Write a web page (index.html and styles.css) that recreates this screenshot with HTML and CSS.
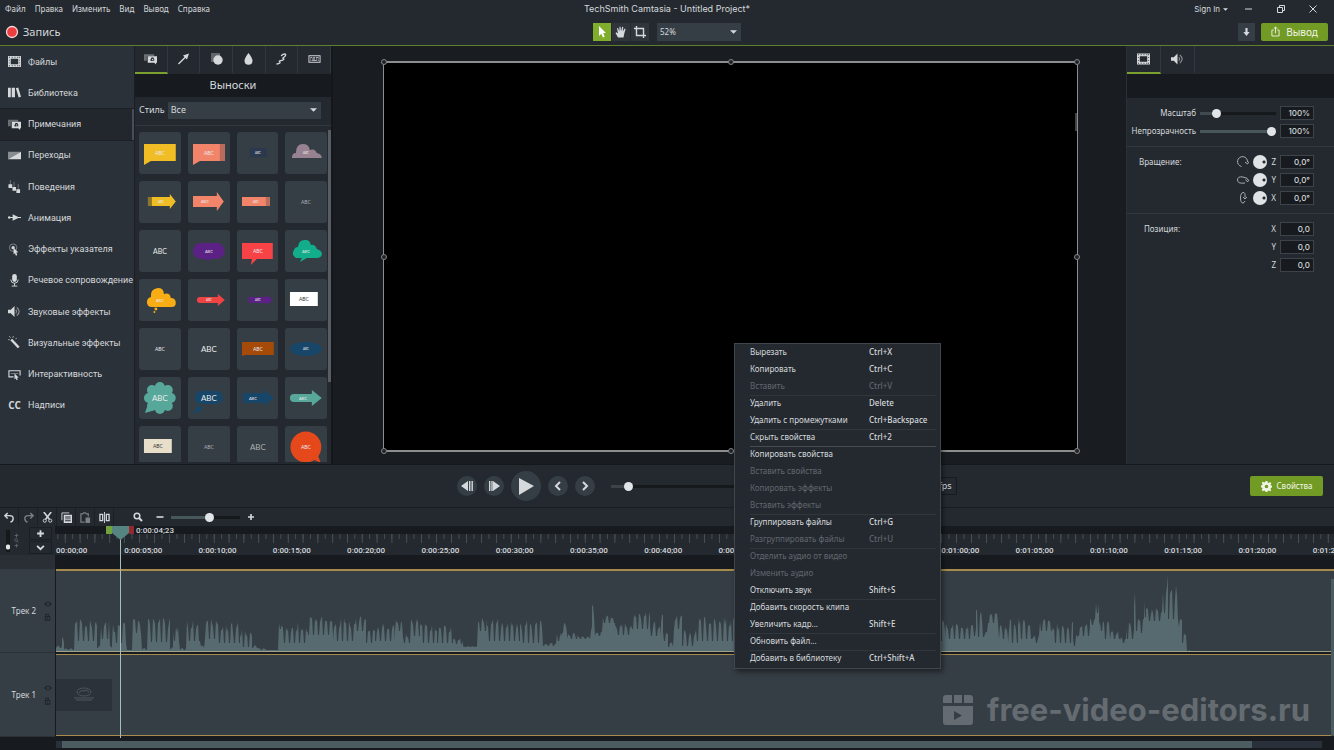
FILE: index.html
```html
<!DOCTYPE html>
<html lang="ru">
<head>
<meta charset="utf-8">
<title>TechSmith Camtasia - Untitled Project*</title>
<link rel="stylesheet" href="styles.css">
</head>
<body>
<svg class="defs" aria-hidden="true">
  <symbol id="film" viewBox="0 0 14 12"><path fill-rule="evenodd" d="M0 0h14v12H0zM3 3v6h8V3zM1 1v1h1V1zm3 0v1h1V1zm3 0v1h1V1zm3 0v1h1V1zM1 10v1h1v-1zm3 0v1h1v-1zm3 0v1h1v-1zm3 0v1h1v-1zM1 4v1h1V4zm0 3v1h1V7zm11-6v1h1V1zm0 3v1h1V4zm0 3v1h1V7zm0 3v1h1v-1z"/></symbol>
  <symbol id="callout" viewBox="0 0 14 12"><path opacity=".4" d="M0 1h11v2H3v5H0z"/><path fill-rule="evenodd" d="M4 3h10v7h-1v2l-2-2H4zM8 4.500L7.500 6q-1 .5-.5 1.500t2 .5h2V6L10 4.500zM8.500 6H10v1H8.500z"/></symbol>
  <symbol id="speaker" viewBox="0 0 14 12"><path d="M0 4h3l4-4v12L3 8H0z"/><path d="M8.500 4q1.500 2 0 4M9.500 1.500q5 4.500 0 9" fill="none" stroke="currentColor" stroke-width="1.200" opacity=".6"/></symbol>
  <symbol id="caret" viewBox="0 0 8 4"><path d="M0 0h8L4 4z"/></symbol>
  <symbol id="eye" viewBox="0 0 10 6"><path fill-rule="evenodd" d="M0 3q5-6 10 0-5 6-10 0zm3 0a2 2 0 004 0 2 2 0 00-4 0z"/></symbol>
  <symbol id="lock" viewBox="0 0 8 9"><path d="M1.500 4V1.500h3V3M1 4h5v4H1z" fill="none" stroke="currentColor" stroke-width="1.200"/><path d="M3 5h1v2H3z"/></symbol>
  <symbol id="lens" viewBox="0 0 10 10"><circle cx="4" cy="4" r="2.800" fill="none" stroke="currentColor" stroke-width="1.500"/><path d="M6 6l3 3" stroke="currentColor" stroke-width="2"/></symbol>
  <symbol id="plus" viewBox="0 0 8 8"><path d="M3.200 1h1.600v2.200H7v1.600H4.800V7H3.200V4.800H1V3.200h2.200z"/></symbol>
</svg>

<header class="titlebar">
  <nav class="menubar">
    <button>Файл</button><button>Правка</button><button>Изменить</button><button>Вид</button><button>Вывод</button><button>Справка</button>
  </nav>
  <h1>TechSmith Camtasia - Untitled Project*</h1>
  <div class="window-buttons">
    <button class="signin">Sign In <svg class="caret-s"><use href="#caret"/></svg></button>
    <button aria-label="Свернуть"><svg viewBox="0 0 10 10"><path d="M1 5h7" stroke="currentColor"/></svg></button>
    <button aria-label="Развернуть"><svg viewBox="0 0 10 10"><path d="M1.500 3.500h5v5h-5zM3.500 3V1.500h5v5H7" fill="none" stroke="currentColor"/></svg></button>
    <button aria-label="Закрыть"><svg viewBox="0 0 10 10"><path d="M1.500 1.500l7 7M8.500 1.500l-7 7" stroke="currentColor"/></svg></button>
  </div>
</header>

<div class="toolbar">
  <button class="record"><svg viewBox="0 0 14 14"><circle cx="7" cy="7" r="5.500" fill="#ee3c40" stroke="#f4dadb" stroke-width="1.300"/></svg>Запись</button>
  <div class="tools">
    <button class="tool active" aria-label="Выделение"><svg viewBox="0 0 12 12"><path d="M3 0v10l2.300-2.200L7 11.500l1.700-.8L7.200 7H10z"/></svg></button>
    <button class="tool" aria-label="Рука"><svg viewBox="0 0 12 12"><path d="M3 11.500L.5 7l1-.7L3 7.500 2 2.300l1-.3 1.300 3.500L4.500.800h1.100L6 5.200 7.300.800l1 .2L7.800 5.500l1.900-3 .9.400L9.300 7.500 8.500 11.500z"/></svg></button>
    <button class="tool" aria-label="Обрезка"><svg viewBox="0 0 12 12"><path d="M0 2.500h9.500V12M2.500 0v9.500H12" fill="none" stroke="currentColor" stroke-width="1.400"/></svg></button>
    <div class="select-box zoom-box"><select aria-label="Масштаб холста"><option>52%</option></select><svg class="caret"><use href="#caret"/></svg></div>
  </div>
  <div class="share">
    <button class="download" aria-label="Загрузить"><svg viewBox="0 0 10 10"><path d="M3.800.500h2.400V5H8.500L5 9.500 1.500 5h2.300z"/></svg></button>
    <button class="green export"><svg viewBox="0 0 10 12"><path d="M3 4.500H1v6.500h8V4.500H7M5 8V1M3 3l2-2 2 2" fill="none" stroke="currentColor"/></svg>Вывод</button>
  </div>
</div>

<main class="workspace">
  <nav class="sidebar">
    <button><svg><use href="#film"/></svg>Файлы</button>
    <button><svg viewBox="0 0 14 12"><path d="M0 1h3v10H0zM4 1h3.500v10H4zM8.500 1.500l2.500-1 3 10-2.500 1z"/></svg>Библиотека</button>
    <button class="current"><svg><use href="#callout"/></svg>Примечания</button>
    <button><svg viewBox="0 0 14 12"><path d="M0 2h14L0 10z" opacity=".55"/><path d="M14 2v8H0z"/></svg>Переходы</button>
    <button><svg viewBox="0 0 14 14"><path d="M2 0h1v5H2zM6 2h1v6H6zM10.500 4h1v6h-1z" opacity=".4"/><path d="M.5 4.500h4v4h-4zM4.800 7.500h3.800v4H4.800zM9 10h4v4H9z"/></svg>Поведения</button>
    <button><svg viewBox="0 0 14 12"><path d="M0 5.400h5V2.500l6 2.900h3v1.200h-3L5 9.500V6.600H0z"/><circle cx="1.300" cy="6" r="1.300"/></svg>Анимация</button>
    <button><svg viewBox="0 0 14 14"><circle cx="5.500" cy="5" r="4" fill="none" stroke="currentColor" opacity=".5"/><circle cx="5.500" cy="5" r="1.800"/><path d="M6 5l5 5-2 .3 1 2.700-1.500.6-1-2.600L6 12z"/></svg>Эффекты указателя</button>
    <button><svg viewBox="0 0 14 14"><rect x="4.500" y="0" width="5" height="8.500" rx="2.500"/><path d="M3 6q0 4 4 4t4-4M7 10v3M4 13h6" fill="none" stroke="currentColor"/></svg>Речевое сопровождение</button>
    <button><svg><use href="#speaker"/></svg>Звуковые эффекты</button>
    <button><svg viewBox="0 0 14 14"><path d="M2.500 4.500L4.500 3l8 8.500-2 1.800z"/><path d="M1 0l2 2M6 0L5 2M0 4h2M8 3l1.500-.5" stroke="currentColor" opacity=".7"/></svg>Визуальные эффекты</button>
    <button><svg viewBox="0 0 14 12"><path d="M6 8.500H1V2h12v5" fill="none" stroke="currentColor" stroke-width="1.200"/><path d="M3 5h8" stroke="currentColor" opacity=".5"/><path d="M7 5l4.500 4.300-1.800.3.800 2.200-1.300.2-1-2L7 11z"/></svg>Интерактивность</button>
    <button><b>CC</b>Надписи</button>
  </nav>

  <section class="library">
    <div class="tabs six">
      <button class="on" aria-label="Выноски"><svg><use href="#callout"/></svg></button>
      <button aria-label="Стрелки"><svg viewBox="0 0 12 12"><path d="M.5 10.600L7 4 5.500 2.500 11.500.5 9.500 6.500 8 5 1.400 11.500z"/></svg></button>
      <button aria-label="Фигуры"><svg viewBox="0 0 13 12"><path d="M1 0h9v9H1z" opacity=".35"/><circle cx="8" cy="7" r="4.700"/></svg></button>
      <button aria-label="Размытие"><svg viewBox="0 0 12 12"><path d="M6 0q4 5 4 7.800a4 4 0 01-8 0Q2 5 6 0z"/></svg></button>
      <button aria-label="Рисование"><svg viewBox="0 0 12 12"><path d="M6 2.500C8 .5 11 .5 10 2.500S6.500 5 7.500 5.500 9 6 7.500 7 3 7.500 4 8.500 5 10.500 1.500 11" fill="none" stroke="currentColor" stroke-width="1.300" stroke-linecap="round"/></svg></button>
      <button aria-label="Клавиши"><svg viewBox="0 0 14 12"><path fill-rule="evenodd" d="M.5 2h13v8H.5zM1.500 3v6h11V3z"/><path d="M2.500 4h2v1h-2zm3 0h2v1h-2zm3 0h3v1h-3zm-6 1.500h1v1h-1zm2 0h3v1h-3zm4 0h1v1h-1zm2 0h1v1h-1zM2.500 7h1v1h-1zm2 0h5v1h-5zm6 0h1v1h-1z"/></svg></button>
    </div>
    <h2>Выноски</h2>
    <div class="style-row"><label for="style">Стиль</label><div class="select-box"><select id="style"><option>Все</option></select><svg class="caret"><use href="#caret"/></svg></div></div>
    <div class="thumbs">
      <svg viewBox="0 0 42 42"><path fill="#f0bd25" d="M5 12h32v17H12l-7 4z"/><text x="21" y="23" class="t5">ABC</text></svg>
      <svg viewBox="0 0 42 42"><path fill="#f28569" d="M5 12h32v17H12l-7 4z"/><path fill="#b96c5b" d="M32 12h5v17h-5z"/><text x="21" y="23" class="t5">ABC</text></svg>
      <svg viewBox="0 0 42 42"><path fill="#2c384e" d="M13 16h17v9H14l-4 3 3-4z"/><text x="21" y="22" class="t3">ABC</text></svg>
      <svg viewBox="0 0 42 42"><path fill="#988292" d="M7 26q0-5 4-5 0-9 7-9 6 0 7 6 5-2 7 3 5 1 5 5z"/><text x="21" y="22" class="t3">ABC</text></svg>
      <svg viewBox="0 0 42 42"><path fill="#efbd25" d="M9 16h22v-3l6 7.500-6 7.500v-3H9z"/><path fill="#8d752a" d="M9 16h4v9H9z"/><text x="22" y="22" class="t3">ABC</text></svg>
      <svg viewBox="0 0 42 42"><path fill="#f28569" d="M5 15h24v-4l7 9.500-7 9.500v-4H5z"/><text x="17" y="22" class="t4">ABC</text></svg>
      <svg viewBox="0 0 42 42"><path fill="#f28569" d="M5 16h28v9H5z"/><path fill="#b96c5b" d="M29 16h4v9h-4z"/><text x="19" y="22" class="t3">ABC</text></svg>
      <svg viewBox="0 0 42 42"><text x="21" y="23" class="t5 dim">ABC</text></svg>
      <svg viewBox="0 0 42 42"><text x="21" y="24" class="t7">ABC</text></svg>
      <svg viewBox="0 0 42 42"><rect x="5" y="13" width="32" height="16" rx="8" fill="#5c2185"/><path fill="#5c2185" d="M17 28l4 4v-4z"/><text x="21" y="23" class="t4">ABC</text></svg>
      <svg viewBox="0 0 42 42"><path fill="#f74346" d="M5 13h31v16H20l-6 6 1-6H5z"/><text x="21" y="23" class="t5">ABC</text></svg>
      <svg viewBox="0 0 42 42"><path fill="#12ad8b" d="M11 28q-5-3-2-8 1-3 4-3 1-8 8-7 4 0 5 5 4-1 6 4 6 2 5 6-1 3-5 3H22l-7 4 2-4z"/><text x="21" y="23" class="t4">ABC</text></svg>
      <svg viewBox="0 0 42 42"><path fill="#f9ad14" d="M13 28q-5 0-5-5 0-4 4-5-1-8 7-9 6 0 6 6 6-2 7 4 5 0 5 5 0 4-4 4z"/><circle cx="17" cy="30" r="1.500" fill="#f9ad14"/><circle cx="15.500" cy="33" r="1" fill="#f9ad14"/><text x="21" y="23" class="t4">ABC</text></svg>
      <svg viewBox="0 0 42 42"><path fill="#ef4444" d="M12 18h18v-3l7 6-7 6v-3H12a3 3 0 010-6z"/><text x="21" y="22" class="t3">ABC</text></svg>
      <svg viewBox="0 0 42 42"><path fill="#5c2185" d="M11 18h19v-2l6 5-6 5v-2H12z"/><text x="21" y="22" class="t3">ABC</text></svg>
      <svg viewBox="0 0 42 42"><path fill="#fff" d="M5 13h28v14H5z"/><text x="19" y="22" class="t5 dark">ABC</text></svg>
      <svg viewBox="0 0 42 42"><text x="21" y="23" class="t5">ABC</text></svg>
      <svg viewBox="0 0 42 42"><text x="21" y="24" class="t8">ABC</text></svg>
      <svg viewBox="0 0 42 42"><path fill="#a54a09" d="M5 14h32v13H8l-3 1z"/><text x="21" y="23" class="t5">ABC</text></svg>
      <svg viewBox="0 0 42 42"><ellipse cx="21" cy="21" rx="16" ry="7" fill="#174669"/><text x="21" y="22" class="t3">ABC</text></svg>
      <svg viewBox="0 0 42 42"><g fill="#57a89a"><circle cx="21" cy="21" r="13"/><circle cx="21" cy="10" r="5"/><circle cx="21" cy="32" r="5"/><circle cx="10" cy="21" r="5"/><circle cx="32" cy="21" r="5"/><circle cx="13" cy="13" r="5"/><circle cx="29" cy="13" r="5"/><circle cx="13" cy="29" r="5"/><circle cx="29" cy="29" r="5"/><path d="M6 36l2-6 5 4z"/></g><text x="21" y="24" class="t8">ABC</text></svg>
      <svg viewBox="0 0 42 42"><rect x="7" y="14" width="28" height="13" rx="6" fill="#174669"/><circle cx="11" cy="32" r="3" fill="#174669"/><circle cx="7" cy="35" r="1.500" fill="#174669"/><text x="21" y="24" class="t8">ABC</text></svg>
      <svg viewBox="0 0 42 42"><path fill="#174669" d="M6 16h21v-3l10 8-10 8v-3H6z"/><text x="16" y="23" class="t4">ABC</text></svg>
      <svg viewBox="0 0 42 42"><path fill="#57a89a" d="M9 17h18v-4l10 8-10 8v-4H9a4 4 0 010-8z"/><text x="18" y="23" class="t4">ABC</text></svg>
      <svg viewBox="0 0 42 42"><path fill="#e8dfcb" d="M5 13h28v14H5z"/><text x="19" y="22" class="t5 dark">ABC</text></svg>
      <svg viewBox="0 0 42 42"><text x="21" y="23" class="t5 dim">ABC</text></svg>
      <svg viewBox="0 0 42 42"><text x="21" y="24" class="t8 dim">ABC</text></svg>
      <svg viewBox="0 0 42 42"><circle cx="21" cy="21" r="15.500" fill="#e5481b"/><path fill="#e5481b" d="M27 33l9 4-3-8z"/><text x="21" y="23" class="t5">ABC</text></svg>
    </div>
  </section>

  <section class="stage">
    <div class="canvas">
      <i class="h nw"></i><i class="h n"></i><i class="h ne"></i><i class="h w"></i><i class="h e"></i><i class="h sw"></i><i class="h s"></i><i class="h se"></i>
    </div>
  </section>

  <aside class="props">
    <div class="tabs">
      <button class="on" aria-label="Видео"><svg><use href="#film"/></svg></button>
      <button aria-label="Аудио"><svg><use href="#speaker"/></svg></button>
    </div>
    <div class="band"></div>
    <div class="group">
      <div class="row"><label for="scale">Масштаб</label><input id="scale" type="range" value="18"><input class="num" aria-label="Масштаб, %" value="100%"></div>
      <div class="row"><label for="opacity">Непрозрачность</label><input id="opacity" class="full" type="range" value="100"><input class="num" aria-label="Непрозрачность, %" value="100%"></div>
    </div>
    <div class="group">
      <div class="row"><span class="name">Вращение:</span><svg class="rot" viewBox="0 0 12 12"><path d="M4.500 10.500a5 5 0 116-4.500M8 6l2.500 2L12 5.500"/></svg><i class="knob"></i><label for="rz">Z</label><input id="rz" class="num" value="0,0°"></div>
      <div class="row"><svg class="rot" viewBox="0 0 12 12"><path d="M8 9Q.5 10 .5 6T6 3t5 3M8.500 5.500l2 2.500L12 5.500"/></svg><i class="knob"></i><label for="ry">Y</label><input id="ry" class="num" value="0,0°"></div>
      <div class="row"><svg class="rot" viewBox="0 0 12 12"><path d="M8 9q-1 2-2 2Q3.500 11 3.500 6T6 .5t2 5M6 5l2 2 2-2"/></svg><i class="knob"></i><label for="rx">X</label><input id="rx" class="num" value="0,0°"></div>
    </div>
    <div class="group">
      <div class="row"><span class="name">Позиция:</span><label for="px">X</label><input id="px" class="num" value="0,0"></div>
      <div class="row"><label for="py">Y</label><input id="py" class="num" value="0,0"></div>
      <div class="row"><label for="pz">Z</label><input id="pz" class="num" value="0,0"></div>
    </div>
  </aside>
</main>

<div class="playback">
  <div class="transport">
    <button aria-label="Предыдущий кадр"><svg viewBox="0 0 20 20"><path d="M4 10l7-5v10zM12 5h1.400v10H12zM14.500 5h1.400v10h-1.400z"/></svg></button>
    <button aria-label="Следующий кадр"><svg viewBox="0 0 20 20"><path d="M16 10L9 5v10zM5 5h1.400v10H5zM7.300 5h1.400v10H7.300z"/></svg></button>
    <button class="play" aria-label="Воспроизвести"><svg viewBox="0 0 30 30"><path d="M8 7l15 8-15 9z"/></svg></button>
    <button aria-label="Назад"><svg viewBox="0 0 20 20"><path d="M12 6l-4 4 4 4" fill="none" stroke="currentColor" stroke-width="2"/></svg></button>
    <button aria-label="Вперёд"><svg viewBox="0 0 20 20"><path d="M8 6l4 4-4 4" fill="none" stroke="currentColor" stroke-width="2"/></svg></button>
  </div>
  <input class="scrub" type="range" aria-label="Позиция воспроизведения" value="5">
  <span class="fps">30 fps</span>
  <button class="green properties"><svg viewBox="0 0 12 12"><path fill-rule="evenodd" d="M5 0h2l.3 1.600 1.300.5 1.400-.9 1.300 1.300-.9 1.400.5 1.300L12 5v2l-1.200.3-.5 1.300.9 1.400-1.300 1.300-1.400-.9-1.300.5L7 12H5l-.3-1.200-1.300-.5-1.400.9L.8 9.900l.9-1.400-.5-1.300L0 7V5l1.200-.3.5-1.300L.8 2 2.100.8l1.400.9 1.300-.5zM6 4a2 2 0 100 4 2 2 0 000-4z"/></svg>Свойства</button>
</div>

<section class="timeline">
  <div class="edit-bar">
    <div class="edit">
      <button aria-label="Отменить"><svg viewBox="0 0 12 12"><path d="M4 1L1 4l3 3M1 4h5q4 0 4 3t-3 4" fill="none" stroke="currentColor" stroke-width="1.500"/></svg></button>
      <button class="off" aria-label="Повторить"><svg viewBox="0 0 12 12"><path d="M8 1l3 3-3 3M11 4H6Q2 4 2 7t3 4" fill="none" stroke="currentColor" stroke-width="1.500"/></svg></button>
      <button aria-label="Вырезать"><svg viewBox="0 0 12 12"><path d="M2 0l6 8M10 0L4 8" stroke="currentColor" stroke-width="1.700"/><circle cx="3" cy="9.500" r="1.700" fill="none" stroke="currentColor"/><circle cx="9" cy="9.500" r="1.700" fill="none" stroke="currentColor"/></svg></button>
      <button aria-label="Копировать"><svg viewBox="0 0 12 12"><path d="M1 9V1h8" fill="none" stroke="currentColor"/><path fill-rule="evenodd" d="M3 3h9v9H3zM4.500 5v1h6V5zm0 2v1h6V7zm0 2v1h6V9z"/></svg></button>
      <button class="off" aria-label="Вставить"><svg viewBox="0 0 12 12"><path d="M5 11H1V2h2l1-1h2l1 1h2v3" fill="none" stroke="currentColor" stroke-width="1.300"/><path d="M6 6h5v6H6z"/></svg></button>
      <button aria-label="Разделить"><svg viewBox="0 0 12 12"><path d="M1 2.500h3v7H1zM8 2.500h3v7H8z" fill="none" stroke="currentColor" stroke-width="1.400"/><path d="M5.500 0h1v12h-1z"/></svg></button>
    </div>
    <svg class="lens"><use href="#lens"/></svg>
    <button class="step" aria-label="Уменьшить"><svg viewBox="0 0 8 8"><path d="M.5 3.200h7v1.600h-7z"/></svg></button>
    <input class="zoom" type="range" aria-label="Масштаб шкалы" value="57">
    <button class="step" aria-label="Увеличить"><svg><use href="#plus"/></svg></button>
  </div>

  <div class="time-head">
    <div class="corner">
      <i class="height-slider"></i>
      <span class="height-lens"><svg><use href="#plus"/></svg><svg><use href="#lens"/></svg><svg><use href="#plus"/></svg></span>
      <div class="corner-buttons">
        <button aria-label="Добавить дорожку"><svg><use href="#plus"/></svg></button>
        <button aria-label="Свернуть дорожки"><svg viewBox="0 0 8 8"><path d="M1 2.500l3 3 3-3" fill="none" stroke="currentColor" stroke-width="1.600"/></svg></button>
      </div>
    </div>
    <div class="ruler">
      <div class="ticks">
        <span class="first">00:00;00</span><span>0:00:05;00</span><span>0:00:10;00</span><span>0:00:15;00</span><span>0:00:20;00</span><span>0:00:25;00</span><span>0:00:30;00</span><span>0:00:35;00</span><span>0:00:40;00</span><span>0:00:45;00</span><span>0:00:50;00</span><span>0:00:55;00</span><span>0:01:00;00</span><span>0:01:05;00</span><span>0:01:10;00</span><span>0:01:15;00</span><span>0:01:20;00</span><span>0:01:25;00</span>
      </div>
    </div>
  </div>

  <div class="track">
    <div class="track-head"><span>Трек 2</span><span class="flags"><svg><use href="#eye"/></svg><svg><use href="#lock"/></svg></span></div>
    <div class="clip"><svg class="wave" viewBox="56 0 1278 80" preserveAspectRatio="none"><path id="wave"/></svg></div>
  </div>
  <div class="track second">
    <div class="track-head"><span>Трек 1</span><span class="flags"><svg><use href="#eye"/></svg><svg><use href="#lock"/></svg></span></div>
    <div class="clip"><svg class="poster" viewBox="0 0 56 32"><ellipse cx="28" cy="13" rx="7" ry="4" fill="none" stroke="#596168" stroke-width=".7"/><path d="M23 14q3-4 4-2 4-2 6 1M18 19h20M20 21h16" fill="none" stroke="#596168" stroke-width=".8"/></svg></div>
  </div>
  <div class="scroll"><i></i></div>
  <i class="v-scroll"></i>

  <div class="playhead">
    <div class="marker"><i class="in"></i><svg viewBox="0 0 17 14"><path d="M0 0h17v7l-8.500 7L0 7z" fill="#568480"/></svg><i class="out"></i><span>0:00:04;23</span></div>
  </div>
  <div class="watermark">
    <svg viewBox="0 0 30 30"><path fill-rule="evenodd" d="M3 0h6v8H0V3q0-3 3-3zM11 0h8v8h-8zM21 0h6q3 0 3 3v5h-9zM0 11h30v16q0 3-3 3H3q-3 0-3-3zM11 16v9l8-4.500z"/></svg>free-video-editors.ru
  </div>
</section>

<div class="context" role="menu">
  <button role="menuitem"><span>Вырезать</span><kbd>Ctrl+X</kbd></button>
  <button role="menuitem"><span>Копировать</span><kbd>Ctrl+C</kbd></button>
  <button role="menuitem" disabled><span>Вставить</span><kbd>Ctrl+V</kbd></button>
  <button role="menuitem" class="sep"><span>Удалить</span><kbd>Delete</kbd></button>
  <button role="menuitem"><span>Удалить с промежутками</span><kbd>Ctrl+Backspace</kbd></button>
  <button role="menuitem" class="sep"><span>Скрыть свойства</span><kbd>Ctrl+2</kbd></button>
  <button role="menuitem" class="sep strong"><span>Копировать свойства</span></button>
  <button role="menuitem" disabled><span>Вставить свойства</span></button>
  <button role="menuitem" disabled><span>Копировать эффекты</span></button>
  <button role="menuitem" disabled><span>Вставить эффекты</span></button>
  <button role="menuitem" class="sep"><span>Группировать файлы</span><kbd>Ctrl+G</kbd></button>
  <button role="menuitem" disabled><span>Разгруппировать файлы</span><kbd>Ctrl+U</kbd></button>
  <button role="menuitem" class="sep" disabled><span>Отделить аудио от видео</span></button>
  <button role="menuitem" disabled><span>Изменить аудио</span></button>
  <button role="menuitem"><span>Отключить звук</span><kbd>Shift+S</kbd></button>
  <button role="menuitem" class="sep"><span>Добавить скорость клипа</span></button>
  <button role="menuitem"><span>Увеличить кадр...</span><kbd>Shift+E</kbd></button>
  <button role="menuitem" class="sep"><span>Обновить файл...</span></button>
  <button role="menuitem" class="sep"><span>Добавить в библиотеку</span><kbd>Ctrl+Shift+A</kbd></button>
</div>
<script src="wave.js"></script>
</body>
</html>
```
FILE: styles.css
```css
* { box-sizing: border-box; }
:root {
  --bg: #242930; --deep: #171b1f; --side: #2b3138; --cell: #363e45;
  --text: #d5d9dc; --green: #729b25; --gold: #a68b4c;
}
body {
  margin: 0; height: 100vh; min-height: 700px; display: flex; flex-direction: column;
  position: relative; overflow: hidden; background: var(--bg); color: var(--text);
  font: 9px/12px "Noto Sans", "Open Sans", sans-serif;
}
button, input, select, kbd { font: inherit; color: inherit; }
button { background: none; border: 0; padding: 0; margin: 0; display: flex; align-items: center; justify-content: center; }
svg { fill: currentColor; display: block; }
h1, h2 { margin: 0; font-weight: 400; }
.defs { position: absolute; width: 0; height: 0; }

.titlebar { display: grid; grid-template-columns: 1fr auto 1fr; align-items: center; height: 18px; font-size: 8px; }
.menubar { display: flex; gap: 9px; padding-left: 5px; }
h1 { font: 400 9px/12px Inter, sans-serif; }
.window-buttons { display: flex; justify-content: flex-end; gap: 22px; padding-right: 16px; font-family: Inter, sans-serif; }
.window-buttons svg { width: 10px; height: 10px; }
.signin { gap: 3px; margin-right: -6px; }
.window-buttons .caret-s { width: 5px; height: 3px; }

.toolbar { display: grid; grid-template-columns: 1fr auto 1fr; align-items: center; height: 28px; border-bottom: 1px solid #5f7f2c; }
.record { gap: 4px; padding-left: 5px; justify-self: start; font-size: 11px; }
.record svg { width: 14px; height: 14px; }
.tools { display: flex; gap: 1px; }
.tool { width: 18px; height: 18px; background: #2f353b; }
.tool svg { width: 12px; height: 12px; }
.tool.active { background: #81ad2c; color: #fff; }
.select-box { position: relative; background: var(--cell); }
.select-box select { appearance: none; background: none; border: 0; width: 100%; height: 100%; padding: 0 3px; display: block; }
.caret { position: absolute; right: 4px; top: 50%; margin-top: -2px; width: 7px; height: 4px; pointer-events: none; }
.zoom-box { width: 84px; margin-left: 7px; font-size: 8px; }
.share { display: flex; justify-content: flex-end; gap: 6px; padding-right: 6px; }
.download { width: 17px; height: 18px; background: var(--cell); }
.download svg { width: 9px; height: 10px; }
.green { background: var(--green); border-radius: 2px; color: #f0f4e6; }
.export { width: 67px; height: 18px; gap: 6px; font-size: 10px; }
.export svg { width: 9px; height: 11px; }

.workspace { flex: 1 1 0; min-height: 0; display: grid; grid-template-columns: 135px 198px 1fr 208px; border-bottom: 1px solid #15181b; }
.sidebar { background: var(--side); display: grid; grid-template-rows: repeat(12, 1fr); height: 376px; min-height: 100%; padding-bottom: 43px; border-right: 1px solid #1b1f23; font-family: Roboto, "Noto Sans", sans-serif; }
.sidebar button { justify-content: flex-start; gap: 7px; padding-left: 8px; white-space: nowrap; }
.sidebar svg, .sidebar b { flex: none; width: 13px; height: 13px; }
.sidebar b { font: 700 10px/13px "Open Sans", sans-serif; }
.sidebar .current { background: #22272d; border-right: 2px solid #474e55; box-shadow: 0 1px #1d2126, 0 -1px #1d2126; }

.tabs { display: flex; height: 28px; }
.tabs button { width: 34px; border-right: 1px solid #32383f; border-bottom: 2px solid transparent; }
.tabs svg { width: 13px; height: 12px; }
.tabs .on { border-bottom-color: #7ba02f; }
.tabs.six button { flex: 1; }
.library { display: flex; flex-direction: column; min-height: 0; min-width: 0; padding-bottom: 2px; border-right: 2px solid #15181b; }
h2 { background: var(--deep); text-align: center; font-size: 11px; line-height: 21px; padding-bottom: 2px; }
.style-row { display: flex; align-items: center; gap: 3px; height: 29px; padding: 0 10px 2px 4px; border-bottom: 1px solid #32383e; }
.style-row .select-box { flex: 1; height: 17px; }
.thumbs { flex: 1; min-height: 0; margin-top: 4px; padding: 2px 4px 0 4px; overflow: hidden; display: grid; grid-template-columns: repeat(4, 1fr); grid-auto-rows: 42px; gap: 7px; align-content: start; position: relative; }
.thumbs::after { content: ""; position: absolute; right: 0; top: 0; width: 3px; height: 76%; background: #575c65; }
.thumbs svg { width: 100%; height: 100%; background: var(--cell); border-radius: 3px; }
.thumbs text { font-family: Lato, sans-serif; text-anchor: middle; fill: #e9ecec; }
.t3 { font-size: 3px; } .t4 { font-size: 4px; } .t5 { font-size: 5px; } .t7 { font-size: 7px; } .t8 { font-size: 8px; }
.thumbs .dim { fill: #a9afb3; }
.thumbs .dark { fill: #333; }

.stage { background: #191d21; padding: 15px 48px 12px 50px; display: grid; }
.canvas { position: relative; background: #000; border: solid #8b8d8e; border-width: 2px 1px; }
.canvas::after { content: ""; position: absolute; right: 0; top: 13%; width: 2px; height: 18px; background: #444; }
.h { position: absolute; width: 6px; height: 6px; border: 1px solid #858889; border-radius: 50%; background: #202326; margin: -3px; }
.nw, .n, .ne { top: -1px; } .sw, .s, .se { top: calc(100% + 1px); } .w, .e { top: 50%; }
.nw, .w, .sw { left: 0; } .n, .s { left: 50%; } .ne, .e, .se { left: 100%; }

.props { border-left: 1px solid #2b3036; min-width: 0; }
.band { height: 24px; background: var(--deep); }
.group { padding: 6px 20px 6px 5px; border-bottom: 1px solid #32383e; }
.group:last-child { border-bottom: 0; }
.row { display: flex; align-items: center; justify-content: flex-end; height: 18px; gap: 4px; font-size: 8px; }
.row .name { flex: 1; text-align: left; padding-left: 7px; }
.group:last-child .name { padding-left: 12px; }
.num { width: 34px; height: 14px; padding: 0 3px; text-align: right; background: var(--deep); border: 1px solid #3d4449; font: 500 8px/12px Inter, sans-serif; }
.rot { width: 12px; height: 12px; fill: none; stroke: #a5abaf; }
.knob { width: 14px; height: 14px; border-radius: 50%; background: radial-gradient(circle at 11px 7px, #252a30 1px, #dfe3e6 2px); }

input[type=range] { appearance: none; margin: 0; height: 10px; width: 76px; background: linear-gradient(#15191c, #15191c) center / 100% 3px no-repeat; }
input[type=range]::-webkit-slider-thumb { appearance: none; width: 9px; height: 9px; border-radius: 50%; background: #e1e5e8; border: 0; }
#scale { background: linear-gradient(90deg, #414a50 20%, #15191c 20%) center / 100% 3px no-repeat; }
input.full { background: linear-gradient(#4a5759, #4a5759) center / 100% 3px no-repeat; }

.playback { display: flex; align-items: center; height: 42px; padding: 0 11px 0 457px; }
.transport { display: flex; align-items: center; gap: 7px; }
.transport button { width: 20px; height: 20px; border-radius: 50%; background: var(--cell); }
.transport .play { width: 30px; height: 30px; }
.transport svg { width: 100%; height: 100%; }
.playback .scrub { width: 260px; margin-left: 16px; background: linear-gradient(90deg, #3b4349 7%, #15191c 7%) center / 100% 3px no-repeat; }
.fps { margin-left: 50px; padding: 2px 4px; border: 1px solid #171b1f; font-size: 9px; white-space: nowrap; }
.properties { width: 73px; height: 20px; margin-left: auto; gap: 5px; font-size: 8px; }
.properties svg { width: 11px; height: 11px; }

.timeline { position: relative; background: var(--deep); }
.edit-bar { display: flex; align-items: center; height: 19px; background: var(--bg); border-top: 1px solid #1a1d21; }
.edit { display: flex; }
.edit button { width: 19px; height: 18px; border-right: 1px solid #1c2024; }
.edit svg { width: 11px; height: 11px; }
.edit .off { color: #7a8085; }
.lens { width: 10px; height: 10px; margin: 0 13px 0 19px; }
.step svg { width: 8px; height: 8px; }
.edit-bar .zoom { flex: none; width: 69px; margin: 0 7px; background: linear-gradient(90deg, #47575a 55%, #15191c 55%) center / 100% 3px no-repeat; }

.time-head { display: flex; height: 43px; }
.corner { width: 55px; flex: none; height: 29px; background: var(--bg); display: flex; align-items: center; padding-left: 6px; box-shadow: 0 14px #2a2f36; }
.height-slider { width: 4px; height: 22px; background: radial-gradient(circle at 2px 17px, #e1e5e8 2px, #15191c 3px); }
.height-lens { margin: 0 10px 0 4px; color: #596066; }
.height-lens svg { width: 5px; height: 5px; }
.corner-buttons { display: grid; gap: 1px; }
.corner-buttons button { width: 23px; height: 13px; border: 1px solid #1b1f23; }
.corner-buttons svg { width: 9px; height: 9px; }
.ruler { flex: 1; min-width: 0; overflow: hidden; height: 29px; border-top: 8px solid var(--deep); background: var(--bg); }
.ticks { width: calc(100% + 58px); margin-left: -5px; display: grid; grid-template-columns: repeat(18, 1fr); }
.ticks span {
  height: 21px; padding-top: 11px; font: 500 8px/12px Roboto, sans-serif;
  background: linear-gradient(90deg, #474e53 1px, transparent 1px) 0 0 / 10% 5px repeat-x,
    linear-gradient(90deg, #474e53 1px, transparent 1px) 0 0 / 20% 9px repeat-x;
}
.ticks .first { padding-left: 6px; }

.track { display: flex; height: 84px; }
.track-head { width: 55px; flex: none; display: flex; align-items: center; justify-content: flex-end; gap: 8px; padding-right: 3px; background: var(--cell); border-bottom: 1px solid #2b3238; white-space: nowrap; font-size: 8px; }
.flags { color: #20262b; display: grid; gap: 5px; }
.flags svg { width: 8px; height: 8px; }
.clip { flex: 1; min-width: 0; display: flex; align-items: flex-end; background: var(--cell); border-top: 2px solid var(--gold); border-bottom: 1px solid #9fa088; margin: 0 0 1px 1px; }
.second .clip { align-items: center; border-bottom-color: var(--gold); border-top-width: 1px; margin-top: 1px; }
.wave { width: 100%; height: 80px; fill: #566a6f; }
.poster { width: 56px; height: 32px; background: #2b323a; }
.scroll { height: 7px; margin: 4px 12px 2px 56px; background: #2a303a; display: flex; }
.scroll i { flex: none; margin-left: 6px; width: 94%; background: #4b5d60; }
.v-scroll { position: absolute; right: 0; top: 72px; width: 3px; bottom: 14px; background: #4b5d60; }

.playhead { position: absolute; left: 106px; top: 19px; bottom: 12px; }
.playhead::before { content: ""; position: absolute; left: 14px; top: 12px; bottom: 0; width: 1px; background: #a9bcbd; }
.marker { position: relative; display: flex; align-items: flex-start; }
.marker svg { width: 17px; height: 14px; }
.marker i { width: 6px; height: 8px; }
.marker .in { background: #71a33c; } .marker .out { background: #95272e; width: 5px; }
.marker span { margin-left: 2px; font: 500 8px/9px Roboto, sans-serif; }

.watermark { position: absolute; right: 24px; bottom: 20px; display: flex; align-items: center; gap: 14px; color: #656c71; font: 700 31px/40px Inter, sans-serif; }
.watermark svg { width: 30px; height: 30px; }

.context { position: absolute; left: 734px; top: 343px; width: 207px; padding: 0 4px 1px 15px; background: var(--bg); border: 1px solid #40464b; box-shadow: 2px 3px 5px #0007; font-size: 8px; }
.context button { width: 100%; height: 17px; padding-bottom: 3px; display: grid; grid-template-columns: 119px 1fr; text-align: left; justify-items: start; white-space: nowrap; border-top: 1px solid transparent; }
.context .sep { border-top-color: #31363c; }
.context .strong { border-top-color: #454b50; }
.context button:disabled { color: #62676d; }
.context kbd { font: 500 8px/12px "Noto Sans", sans-serif; }
```
FILE: wave.js
```js
// Audio envelope: [start, end, low, high] in viewBox units, heights above the clip's floor.
const envelope = [
  [56,62,3,6],[62,64,8,15],[64,74,1,3],[75,97,10,32],[97,100,3,6],[101,109,12,33],[110,112,3,5],[112,126,8,29],
  [127,132,1,1],[133,141,18,33],[142,147,1,3],[148,170,9,33],[170,173,2,4],[173,179,10,26],[180,186,1,3],
  [187,200,10,32],[201,204,3,6],[205,217,12,33],[218,240,8,30],[240,252,4,22],[252,258,3,6],[258,266,1,3],
  [266,278,1,1],[279,281,22,29],[281,308,8,29],[308,333,16,37],[333,355,10,34],[356,366,20,35],[366,375,8,22],
  [375,395,10,29],[395,402,20,33],[403,410,8,18],[411,420,15,33],[420,437,8,28],[437,453,8,27],[453,463,7,13],
  [463,477,4,5],[478,487,20,35],[487,520,10,33],[520,542,8,31],[543,556,5,8],[557,562,10,18],[562,567,18,28],
  [567,578,12,18],[578,590,12,15],[591,592,20,26],[592,594,35,46],[595,602,15,20],[603,615,28,36],[615,632,16,28],
  [632,650,22,39],[650,661,15,30],[661,663,28,37],[663,668,10,20],[668,673,4,10],[674,682,22,36],[682,696,5,22],
  [697,733,10,36],[733,942,10,34],[942,945,20,32],[945,972,12,28],[973,976,15,28],[976,982,14,44],[983,987,14,20],
  [988,998,28,38],[999,1008,12,26],[1008,1018,8,33],[1018,1032,12,34],[1033,1039,8,16],[1040,1052,20,35],
  [1052,1073,8,30],[1073,1078,5,16],[1078,1090,15,28],[1090,1095,26,35],[1096,1099,38,51],[1099,1104,20,30],
  [1104,1110,12,38],[1110,1120,12,20],[1120,1126,8,14],[1126,1134,12,28],[1134,1137,20,62],[1138,1144,18,40],
  [1144,1146,34,58],[1146,1162,30,43],[1163,1168,38,76],[1168,1178,32,68],[1179,1182,24,34],[1182,1186,8,20],[1187,1190,0,1]
];
let d = "M56 80";
let n = 0;
for (const [from, to, low, high] of envelope) {
  for (let x = from; x <= to; x += 1) {
    n += 1;
    const r = Math.abs(Math.sin(n * 12.9898) * 43758.5453) % 1;
    const up = n % 5 > 1 ? 0.5 + 0.5 * r : 0;
    d += "L" + x + " " + (80 - low - (high - low) * up).toFixed(1);
  }
}
document.getElementById("wave").setAttribute("d", d + "L1190 80Z");
```
